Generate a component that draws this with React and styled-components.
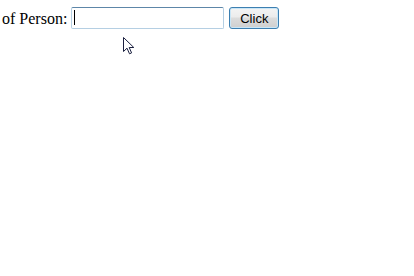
import React from "react";
import styled, { createGlobalStyle } from "styled-components";

const Global = createGlobalStyle`
  html, body { margin: 0; padding: 0; background: #fff; }
  body { font-family: "Liberation Serif", "Times New Roman", serif; font-size: 16px; color: #000; }
`;

const Page = styled.div`
  position: relative;
  width: 414px;
  height: 276px;
  overflow: hidden;
`;

const Row = styled.div`
  display: flex;
  align-items: center;
  padding: 7px 0 0 2px;
  gap: 0;
`;

const Label = styled.span`
  font-family: "Liberation Serif", "Times New Roman", serif;
  font-size: 16px;
  line-height: 21px;
  margin-right: 4px;
`;

const Field = styled.div`
  position: relative;
  box-sizing: border-box;
  width: 153px;
  height: 22px;
  border: 1px solid #b5cfe3;
  border-top-color: #5d86a8;
  border-radius: 2px;
  background: #fff;
`;

const Caret = styled.span`
  position: absolute;
  left: 2px;
  top: 2px;
  width: 1px;
  height: 15px;
  background: #000;
`;

const Button = styled.button`
  box-sizing: border-box;
  margin-left: 5px;
  width: 50px;
  height: 22px;
  padding: 0;
  border: 1px solid #3c7fb1;
  border-radius: 3px;
  background: linear-gradient(#f4f4f4 0%, #ececec 45%, #dcdcdc 50%, #cfcfcf 100%);
  box-shadow: inset 0 0 0 1px #c9e6f7;
  font-family: "Liberation Sans", Arial, sans-serif;
  font-size: 13px;
  color: #000;
`;

const Pointer = styled.svg`
  position: absolute;
  left: 122px;
  top: 36px;
`;

export default function App() {
  return (
    <Page>
      <Global />
      <Row>
        <Label>of Person:</Label>
        <Field>
          <Caret />
        </Field>
        <Button>Click</Button>
      </Row>
      <Pointer width="14" height="20" viewBox="0 0 14 20">
        <path
          d="M1.5 1.5 L1.5 15.5 L5 12.2 L7.5 17.8 L9.6 16.9 L7.2 11.5 L11.8 11.5 Z"
          fill="#fff"
          stroke="#1a1f3f"
          strokeWidth="1"
          strokeLinejoin="miter"
        />
      </Pointer>
    </Page>
  );
}
